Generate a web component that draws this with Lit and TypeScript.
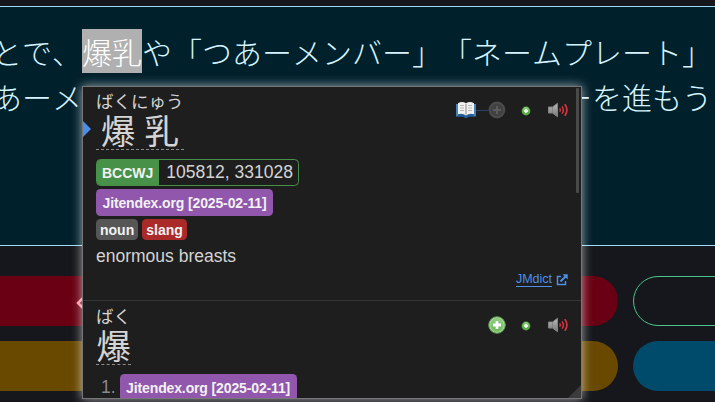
import { LitElement, html, css, svg } from "lit";
import { customElement, property } from "lit/decorators.js";

const speaker = html`<svg width="22" height="18" viewBox="0 0 22 18">
  <defs><linearGradient id="s" x1="0" y1="0" x2="0" y2="1"><stop offset="0" stop-color="#b9b9b9"/><stop offset="1" stop-color="#777"/></linearGradient></defs>
  <path d="M1.500 6h4l5-3.700v13.400l-5-3.700h-4z" fill="url(#s)" stroke="#858585" stroke-width="1"/>
  <path d="M5.500 6v6" stroke="#777" stroke-width=".6"/>
  <g fill="none" stroke="#d83440" stroke-linecap="round">
    <path d="M13 7.800q.8 1.200 0 2.400" stroke-width="1.500"/>
    <path d="M15.300 5.800q2.200 3.200 0 6.400" stroke-width="1.500"/>
    <path d="M18.200 3.800q3.400 5.200 0 10.400" stroke-width="1.700"/>
  </g></svg>`;

const plus = (size: number) => html`<svg width=${size} height=${size} viewBox="0 0 18 18">
  <defs><radialGradient id="g" cx=".5" cy=".65"><stop offset="0" stop-color="#5fb04c"/><stop offset="1" stop-color="#8cc87c"/></radialGradient></defs>
  ${svg`<circle cx="9" cy="9" r="8.300" fill="#a9d79c" stroke="#56994a" stroke-width="1"/>
  <circle cx="9" cy="9" r="6.900" fill="url(#g)"/>
  <path d="M9 5v8M5 9h8" stroke="#fff" stroke-width="2.800"/>`}</svg>`;

const smallPlus = html`<svg width="10" height="10" viewBox="0 0 10 10">
  <circle cx="5" cy="5" r="4.400" fill="#58ad45"/><circle cx="5" cy="3.600" r="2.700" fill="#87c976"/>
  <path d="M5 2.900v4.200M2.900 5h4.200" stroke="#fff" stroke-width="1.500"/></svg>`;

const book = html`<svg width="20" height="18" viewBox="0 0 20 18">
  <path d="M0 3h20v12.800h-7.500l-1.500 1.200H9l-1.500-1.200H0z" fill="#235f9c"/>
  <path d="M0 3h2v12H0zM18 3h2v12h-2z" fill="#4683bb"/>
  <path d="M2 2.200Q6-.2 10 2.200Q14-.2 18 2.200V13.300Q13.500 12 10 14.400Q6.500 12 2 13.300z" fill="#f1f1ef"/>
  <path d="M10 3v10.500" stroke="#999" stroke-width="1.200"/>
  <path d="M4 4.500h4M4 7h4M4 9.500h4M12 4.500h4M12 7h4M12 9.500h4" stroke="#b5b5b5" stroke-width="1"/></svg>`;

const disabledPlus = html`<svg width="18" height="18" viewBox="0 0 18 18">
  <circle cx="9" cy="9" r="8.400" fill="#484848"/><circle cx="9" cy="9" r="7" fill="#414141" stroke="#505050"/>
  <path d="M0 9h9" stroke="#34465f"/><path d="M9 5v8M5 9h8" stroke="#5c5c5c" stroke-width="2"/></svg>`;

const external = html`<svg width="12" height="12" viewBox="0 0 12 12" fill="none" stroke="#4d90e8" stroke-width="1.500">
  <path d="M5 2.500H1.500v8h8V7"/><path d="M4.500 7.500L10 2" stroke-width="1.900"/><path d="M6.500 .3h5.200v5.200z" fill="#4d90e8" stroke="none"/></svg>`;

@customElement("dict-entry")
class DictEntry extends LitElement {
  @property() reading = "";
  @property() term = "";
  @property({ type: Boolean }) saved = false;
  static styles = css`
    :host { display: block; position: relative; }
    .head { display: flex; justify-content: space-between; align-items: flex-start; height: 72px; }
    .word { display: flex; flex-direction: column; margin-top: 5px; border-bottom: 1px dashed #8b8b8b; height: 57px;
      font-family: "Noto Sans CJK JP", sans-serif; }
    .reading { font-size: 17.500px; line-height: 18px; white-space: nowrap; }
    .term { display: flex; justify-content: space-around; font-size: 34.500px; line-height: 38px; }
    .actions { display: flex; align-items: center; height: 20px; margin: 13px -1px 0 0; }
    .actions svg { display: block; }
    .link { width: 12px; height: 1px; background: #2c4062; }
    .small { margin: 1px 16px 0 15px; }
  `;
  render() {
    return html`<div class="head">
        <div class="word"><div class="reading">${this.reading}</div>
          <div class="term">${[...this.term].map((c) => html`<span>${c}</span>`)}</div></div>
        <div class="actions">
          ${this.saved ? html`${book}<span class="link"></span>${disabledPlus}` : plus(18)}
          <span class="small">${smallPlus}</span>${speaker}
        </div>
      </div><slot></slot>`;
  }
}

@customElement("app-root")
class AppRoot extends LitElement {
  static styles = css`
    :host { display: block; position: relative; width: 715px; height: 402px; overflow: hidden; background: #16171c;
      font-family: "Liberation Sans", Arial, sans-serif; }
    .reader { box-sizing: border-box; height: 240px; border: solid #9ddcfa; border-width: 1px 0;
      background: #00202c; padding-top: 22px; overflow: hidden; }
    .bar { height: 6px; }
    .line { display: flex; height: 45px; margin-left: -8px; white-space: pre; color: #d5f4ff;
      font: 300 30px/45px "Noto Sans CJK JP", sans-serif; font-kerning: none; text-spacing-trim: space-all; }
    .line span { flex: none; }
    .lead { width: 90px; }
    .selected { width: 60px; height: 44px; line-height: 45px; background: #b0b0b0; color: #fff; }
    .line .covered { flex: 0 0 480px; }
    .choices { display: grid; grid-template-columns: 658px 658px; grid-auto-rows: 50px; gap: 15px; margin: 30px 0 0 -40px; }
    .choice { box-sizing: border-box; border-radius: 25px; display: flex; align-items: center; }
    .red { background: #690013; color: #ff8f9f; }
    .red svg { margin-left: 116px; margin-top: 4px; }
    .outline { border: 1px solid #4cc38a; }
    .brown { background: #694900; }
    .blue { background: #004b6b; }
    .popup { position: absolute; left: 82px; top: 86px; width: 500px; height: 313px; box-sizing: border-box;
      border: 1px solid #777; background: #1e1e1e; color: #d4d4d4; overflow: hidden; font-size: 17.500px; }
    .glow { position: absolute; left: 82px; top: 86px; width: 500px; height: 313px; box-shadow: 0 0 10px rgba(255,255,255,.62); }
    dict-entry { padding: 1px 13px 0; }
    .first { height: 213px; padding-top: 0; border-bottom: 1px solid #343434; }
    .tag { display: flex; align-items: center; box-sizing: border-box; width: max-content; height: 27px; border-radius: 4.400px; padding: 0 7px 0 6px;
      font-weight: bold; font-size: 14px; color: #f2f2f2; }
    .freq { border: 1px solid #489148; padding: 0 5px 0 0; font-weight: normal; font-size: 17.500px; color: #d4d4d4; overflow: hidden; }
    .freq b { display: flex; align-items: center; align-self: stretch; background: #489148; color: #f2f2f2; font-size: 14px; padding: 0 6px 0 5px; margin-right: 7px; }
    .dict { background: #9057ad; margin-top: 3px; letter-spacing: -.13px; padding-left: 6.500px; padding-right: 6.500px; }
    .tags { display: flex; gap: 4px; margin-top: 3px; }
    .pos { height: 21px; background: #565656; padding: 0 4px; }
    .slang { background: #aa2a2a; }
    .gloss { margin-top: 6px; line-height: 20px; }
    .source { display: flex; justify-content: flex-end; align-items: center; gap: 4px; margin-top: 6px; font-size: 12.500px; color: #4d90e8; }
    .source span { line-height: 14px; border-bottom: 1px solid #4d90e8; }
    .item { display: flex; align-items: center; gap: 4px; margin-left: 5px; color: #8a8a8a; }
    .item .dict { margin-top: 0; }
    .marker { position: absolute; left: 0; top: 34px; border: solid transparent; border-width: 8px 0 8px 8px; border-left-color: #4b8ee8; }
    .scroll { position: absolute; right: 2px; top: 1px; width: 3px; height: 105px; background: #494949; border-radius: 1px; }
    .grip { position: absolute; right: 0; bottom: 0; width: 13px; height: 13px; background: #3b3b3b; clip-path: polygon(100% 0, 100% 100%, 0 100%); }
  `;
  render() {
    return html`
      <div class="bar"></div>
      <div class="reader">
        <div class="line"><span class="lead">とで、</span><span class="selected">爆乳</span><span>や「つあーメンバー」「ネームプレート」</span></div>
        <div class="line"><span>あーメ</span><span class="covered"></span><span>ーを進もう</span></div>
      </div>
      <div class="choices">
        <div class="choice red"><svg width="10" height="12" viewBox="0 0 10 12" fill="none" stroke="currentColor" stroke-width="2.500"><path d="M7 1L2 6l5 5"/></svg></div>
        <div class="choice outline"></div>
        <div class="choice brown"></div><div class="choice blue"></div>
      </div>
      <div class="glow"></div>
      <div class="popup">
        <dict-entry class="first" reading="ばくにゅう" term="爆乳" saved>
          <div class="tag freq"><b>BCCWJ</b>105812, 331028</div>
          <div class="tag dict">Jitendex.org [2025-02-11]</div>
          <div class="tags"><span class="tag pos">noun</span><span class="tag pos slang">slang</span></div>
          <div class="gloss">enormous breasts</div>
          <div class="source"><span>JMdict</span>${external}</div>
        </dict-entry>
        <dict-entry reading="ばく" term="爆">
          <div class="item">1.<div class="tag dict">Jitendex.org [2025-02-11]</div></div>
        </dict-entry>
        <div class="marker"></div><div class="scroll"></div><div class="grip"></div>
      </div>`;
  }
}
